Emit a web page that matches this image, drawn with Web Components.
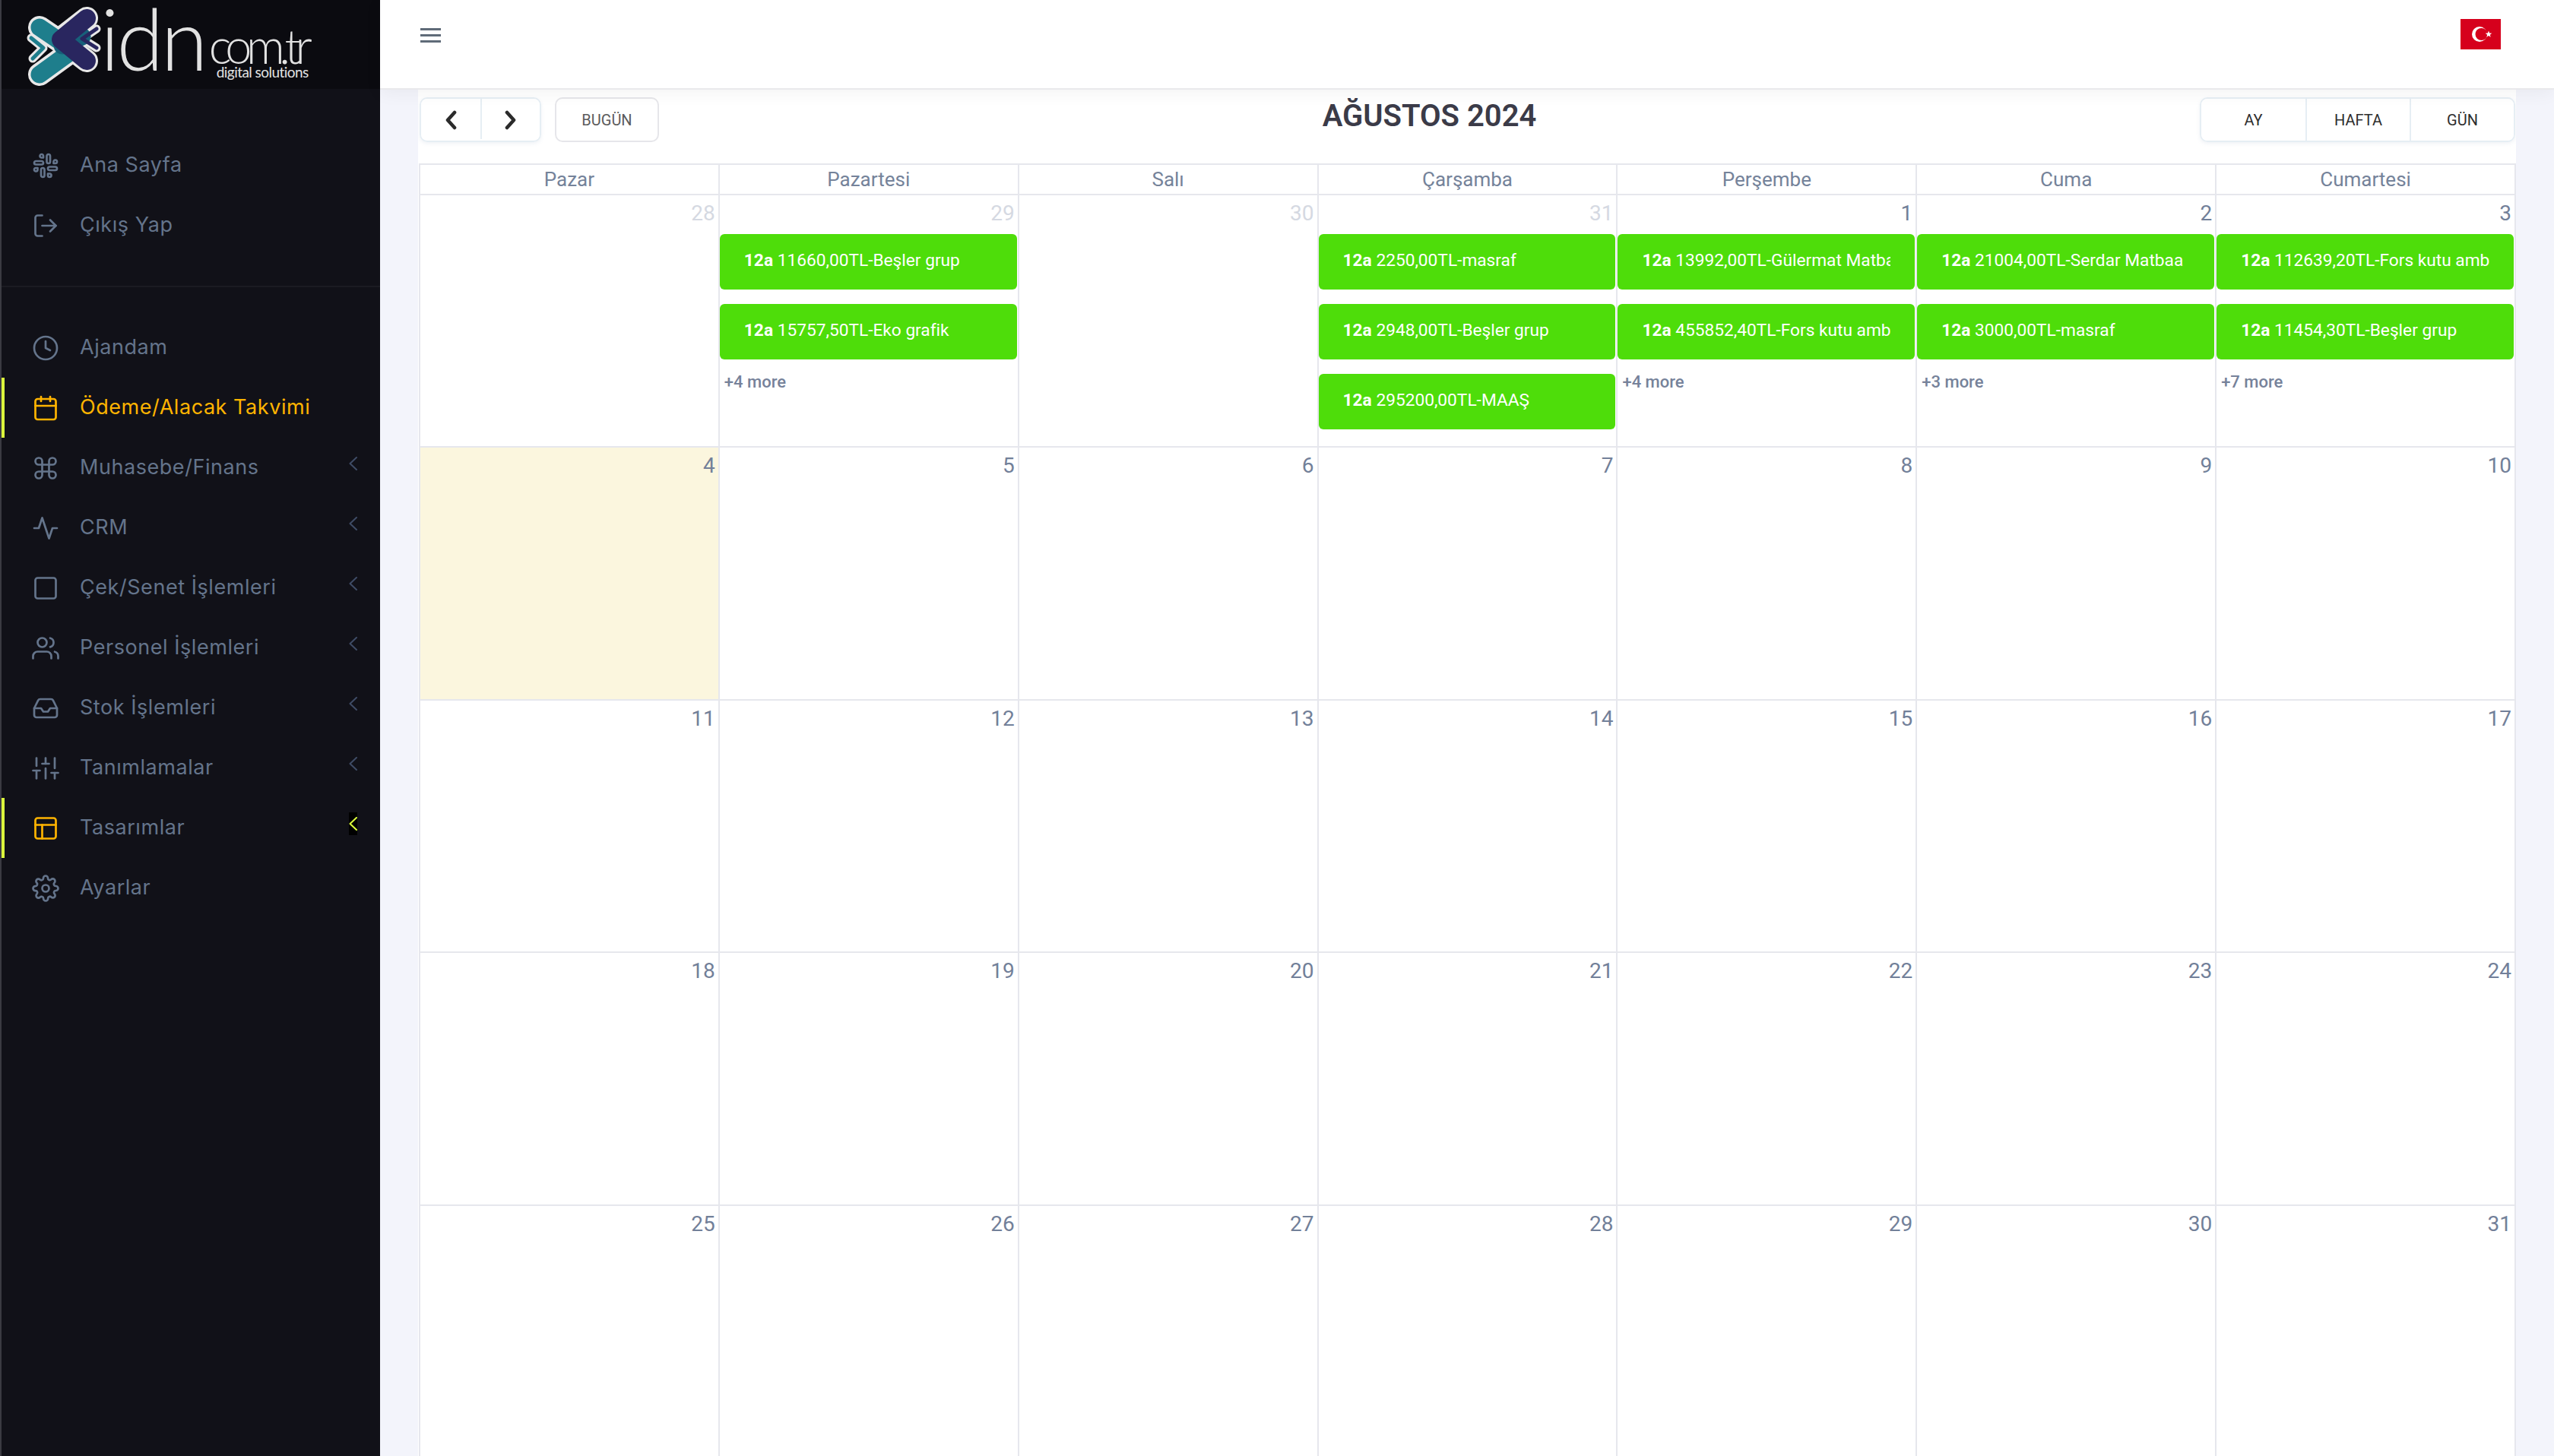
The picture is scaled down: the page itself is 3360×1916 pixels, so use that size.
<!DOCTYPE html>
<html lang="tr">
<head>
<meta charset="utf-8">
<title>Ödeme/Alacak Takvimi</title>
<style>
  html, body { margin: 0; height: 100%; overflow: hidden; background: #f3f4fb; }
</style>
</head>
<body>
<app-shell>
  <side-bar slot="side"></side-bar>
  <top-bar slot="top"></top-bar>
  <cal-card slot="main"></cal-card>
</app-shell>

<script>
const ICONS = {
  slack: '<path d="M14.5 10c-.83 0-1.5-.67-1.5-1.5v-5c0-.83.67-1.5 1.5-1.5s1.5.67 1.5 1.5v5c0 .83-.67 1.5-1.5 1.5z"/><path d="M20.5 10H19V8.5c0-.83.67-1.5 1.5-1.5s1.5.67 1.5 1.5-.67 1.5-1.5 1.5z"/><path d="M9.5 14c.83 0 1.5.67 1.5 1.5v5c0 .83-.67 1.5-1.5 1.5S8 21.33 8 20.5v-5c0-.83.67-1.5 1.5-1.5z"/><path d="M3.5 14H5v1.5c0 .83-.67 1.5-1.5 1.5S2 16.33 2 15.5 2.67 14 3.5 14z"/><path d="M14 14.5c0-.83.67-1.5 1.5-1.5h5c.83 0 1.5.67 1.5 1.5s-.67 1.5-1.5 1.5h-5c-.83 0-1.5-.67-1.5-1.5z"/><path d="M15.5 19H14v1.5c0 .83.67 1.5 1.5 1.5s1.5-.67 1.5-1.5-.67-1.5-1.5-1.5z"/><path d="M10 9.5C10 8.67 9.33 8 8.5 8h-5C2.67 8 2 8.67 2 9.5S2.67 11 3.5 11h5c.83 0 1.5-.67 1.5-1.5z"/><path d="M8.5 5H10V3.5C10 2.67 9.33 2 8.5 2S7 2.67 7 3.5 7.67 5 8.5 5z"/>',
  logout: '<path d="M9 21H5a2 2 0 0 1-2-2V5a2 2 0 0 1 2-2h4"/><polyline points="16 17 21 12 16 7"/><line x1="21" y1="12" x2="9" y2="12"/>',
  clock: '<circle cx="12" cy="12" r="10"/><polyline points="12 6 12 12 16 14"/>',
  calendar: '<rect x="3" y="4" width="18" height="18" rx="2"/><line x1="16" y1="2" x2="16" y2="6"/><line x1="8" y1="2" x2="8" y2="6"/><line x1="3" y1="10" x2="21" y2="10"/>',
  command: '<path d="M18 3a3 3 0 0 0-3 3v12a3 3 0 0 0 3 3 3 3 0 0 0 3-3 3 3 0 0 0-3-3H6a3 3 0 0 0-3 3 3 3 0 0 0 3 3 3 3 0 0 0 3-3V6a3 3 0 0 0-3-3 3 3 0 0 0-3 3 3 3 0 0 0 3 3h12a3 3 0 0 0 3-3 3 3 0 0 0-3-3z"/>',
  activity: '<polyline points="22 12 18 12 15 21 9 3 6 12 2 12"/>',
  square: '<rect x="3" y="3" width="18" height="18" rx="2"/>',
  users: '<path d="M17 21v-2a4 4 0 0 0-4-4H5a4 4 0 0 0-4 4v2"/><circle cx="9" cy="7" r="4"/><path d="M23 21v-2a4 4 0 0 0-3-3.87"/><path d="M16 3.13a4 4 0 0 1 0 7.75"/>',
  inbox: '<polyline points="22 12 16 12 14 15 10 15 8 12 2 12"/><path d="M5.45 5.11L2 12v6a2 2 0 0 0 2 2h16a2 2 0 0 0 2-2v-6l-3.45-6.89A2 2 0 0 0 16.76 4H7.24a2 2 0 0 0-1.79 1.11z"/>',
  sliders: '<line x1="4" y1="21" x2="4" y2="14"/><line x1="4" y1="10" x2="4" y2="3"/><line x1="12" y1="21" x2="12" y2="12"/><line x1="12" y1="8" x2="12" y2="3"/><line x1="20" y1="21" x2="20" y2="16"/><line x1="20" y1="12" x2="20" y2="3"/><line x1="1" y1="14" x2="7" y2="14"/><line x1="9" y1="8" x2="15" y2="8"/><line x1="17" y1="16" x2="23" y2="16"/>',
  layout: '<rect x="3" y="3" width="18" height="18" rx="2"/><line x1="3" y1="9" x2="21" y2="9"/><line x1="9" y1="21" x2="9" y2="9"/>',
  settings: '<circle cx="12" cy="12" r="3"/><path d="M19.4 15a1.65 1.65 0 0 0 .33 1.82l.06.06a2 2 0 0 1 0 2.83 2 2 0 0 1-2.83 0l-.06-.06a1.65 1.65 0 0 0-1.82-.33 1.65 1.65 0 0 0-1 1.51V21a2 2 0 0 1-2 2 2 2 0 0 1-2-2v-.09A1.65 1.65 0 0 0 9 19.4a1.65 1.65 0 0 0-1.82.33l-.06.06a2 2 0 0 1-2.83 0 2 2 0 0 1 0-2.83l.06-.06a1.65 1.65 0 0 0 .33-1.82 1.65 1.65 0 0 0-1.51-1H3a2 2 0 0 1-2-2 2 2 0 0 1 2-2h.09A1.65 1.65 0 0 0 4.6 9a1.65 1.65 0 0 0-.33-1.82l-.06-.06a2 2 0 0 1 0-2.83 2 2 0 0 1 2.83 0l.06.06a1.65 1.65 0 0 0 1.82.33H9a1.65 1.65 0 0 0 1-1.51V3a2 2 0 0 1 2-2 2 2 0 0 1 2 2v.09a1.65 1.65 0 0 0 1 1.51 1.65 1.65 0 0 0 1.82-.33l.06-.06a2 2 0 0 1 2.83 0 2 2 0 0 1 0 2.83l-.06.06a1.65 1.65 0 0 0-.33 1.82V9a1.65 1.65 0 0 0 1.51 1H21a2 2 0 0 1 2 2 2 2 0 0 1-2 2h-.09a1.65 1.65 0 0 0-1.51 1z"/>'
};

class AppShell extends HTMLElement {
  connectedCallback() {
    this.attachShadow({ mode: 'open' });
    this.shadowRoot.innerHTML = `
      <style>
        :host { display: flex; width: 3360px; height: 1916px; overflow: hidden; background: #f3f4fb; }
        .main { flex: 1; min-width: 0; display: flex; flex-direction: column; }
      </style>
      <slot name="side"></slot>
      <div class="main">
        <slot name="top"></slot>
        <slot name="main"></slot>
      </div>
    `;
  }
}

class BrandLogo extends HTMLElement {
  connectedCallback() {
    this.attachShadow({ mode: 'open' });
    this.shadowRoot.innerHTML = `
      <style>
        :host { display: flex; height: 117px; background: #0b0b10; color: #e2e2e2; font-family: Lato, sans-serif; font-weight: 300; }
        svg { flex: none; width: 134px; height: 117px; }
        .idn { font-size: 112px; line-height: 99px; height: 99px; letter-spacing: -3.5px; margin-left: -4px; }
        .rest { display: flex; flex-direction: column; margin-left: 5px; }
        .com { font-size: 63px; line-height: 46px; letter-spacing: -7.5px; margin-top: 37px; }
        .sub { font-size: 19px; line-height: 20px; letter-spacing: -.55px; margin: 2px 0 0 10px; font-weight: 400; }
      </style>
      <svg viewBox="0 0 134 117" fill="none" stroke-linecap="round" stroke-linejoin="round">
        <g stroke="#e8e8e8">
          <polyline points="50,36 94,66 50,98" stroke-width="30"/>
          <polyline points="39,50 55,63 41,77" stroke-width="11"/>
          <polyline points="112,24 76,52 112,80" stroke-width="30"/>
          <polyline points="125,38 106,51 125,63" stroke-width="11"/>
        </g>
        <polyline points="50,36 94,66 50,98" stroke="#1e7e8c" stroke-width="23"/>
        <polyline points="39,50 55,63 41,77" stroke="#1e7e8c" stroke-width="5"/>
        <polyline points="106,48 80,60" stroke="#17607a" stroke-width="23"/>
        <polyline points="112,24 78,52 112,80" stroke="#29265f" stroke-width="24"/>
        <polyline points="125,38 106,51 125,63" stroke="#29265f" stroke-width="5"/>
      </svg>
      <span class="idn">idn</span>
      <div class="rest">
        <span class="com">com.tr</span>
        <span class="sub">digital solutions</span>
      </div>
    `;
  }
}

class SideItem extends HTMLElement {
  connectedCallback() {
    const icon = this.getAttribute('icon');
    const arrow = this.hasAttribute('arrow');
    this.attachShadow({ mode: 'open' });
    this.shadowRoot.innerHTML = `
      <style>
        :host { display: flex; align-items: center; height: 79px; padding-left: 36px; color: #64748b; font-family: Inter, sans-serif; font-size: 27px; letter-spacing: .55px; box-sizing: border-box; border-left: 4px solid transparent; }
        :host([active]) { border-left-color: #dcff3c; }
        :host([current]) { color: #ffb400; }
        .ic { flex: none; width: 36px; height: 36px; margin-right: 27px; fill: none; stroke: currentColor; stroke-width: 1.8; stroke-linecap: round; stroke-linejoin: round; }
        :host([active]) .ic { color: #ffb400; }
        .label { flex: 1; margin-top: -3px; white-space: nowrap; }
        .arrow { flex: none; width: 11px; height: 30px; margin: -12px 30px 0 0; display: flex; align-items: center; }
        .arrow svg { width: 11px; height: 18px; fill: none; stroke: #3f4c66; stroke-width: 2; stroke-linecap: round; stroke-linejoin: round; }
        :host([active]) .arrow { background: #000; }
        :host([active]) .arrow svg { stroke: #dcff3c; }
      </style>
      <svg class="ic" viewBox="0 0 24 24">${ICONS[icon]}</svg>
      <span class="label"><slot></slot></span>
      ${arrow ? '<span class="arrow"><svg viewBox="0 0 11 18"><polyline points="10 1 1.5 9 10 17"/></svg></span>' : ''}
    `;
  }
}

class SideBar extends HTMLElement {
  connectedCallback() {
    this.attachShadow({ mode: 'open' });
    this.shadowRoot.innerHTML = `
      <style>
        :host { display: flex; flex-direction: column; flex: none; width: 500px; box-sizing: border-box; height: 1916px; background: #111118; border-left: 2px solid #3b3b42; }
        .top { padding: 61px 0 40px; border-bottom: 2px solid #1b1b22; }
        .nav { padding-top: 40px; }
      </style>
      <brand-logo></brand-logo>
      <div class="top">
        <side-item icon="slack">Ana Sayfa</side-item>
        <side-item icon="logout">Çıkış Yap</side-item>
      </div>
      <div class="nav">
        <side-item icon="clock">Ajandam</side-item>
        <side-item icon="calendar" active current>Ödeme/Alacak Takvimi</side-item>
        <side-item icon="command" arrow>Muhasebe/Finans</side-item>
        <side-item icon="activity" arrow>CRM</side-item>
        <side-item icon="square" arrow>Çek/Senet İşlemleri</side-item>
        <side-item icon="users" arrow>Personel İşlemleri</side-item>
        <side-item icon="inbox" arrow>Stok İşlemleri</side-item>
        <side-item icon="sliders" arrow>Tanımlamalar</side-item>
        <side-item icon="layout" arrow active>Tasarımlar</side-item>
        <side-item icon="settings">Ayarlar</side-item>
      </div>
    `;
  }
}

class TopBar extends HTMLElement {
  connectedCallback() {
    this.attachShadow({ mode: 'open' });
    this.shadowRoot.innerHTML = `
      <style>
        :host { display: flex; justify-content: space-between; align-items: flex-start; flex: none; box-sizing: border-box; height: 118px; padding: 25px 70px 0 53px; background: #fff; border-bottom: 2px solid #e9e9ec; box-shadow: 0 4px 22px rgba(0,0,0,.05); position: relative; z-index: 2; }
        .menu { width: 27px; height: 19px; margin-top: 12px; display: flex; flex-direction: column; justify-content: space-between; }
        .menu i { display: block; height: 3px; background: #5f6b78; }
        .flag { display: block; width: 53px; height: 40px; }
      </style>
      <div class="menu"><i></i><i></i><i></i></div>
      <svg class="flag" viewBox="0 0 53 40">
        <rect width="53" height="40" fill="#d6001c"/>
        <circle cx="25" cy="20" r="10" fill="#fff"/>
        <circle cx="27.5" cy="20" r="8" fill="#d6001c"/>
        <polygon fill="#fff" points="37,15.6 38.1,18.6 41.3,18.7 38.8,20.7 39.7,23.8 37,22 34.3,23.8 35.2,20.7 32.7,18.7 35.9,18.6"/>
      </svg>
    `;
  }
}

class CalButton extends HTMLElement {
  connectedCallback() {
    this.attachShadow({ mode: 'open' });
    this.shadowRoot.innerHTML = `
      <style>
        :host { display: flex; align-items: center; justify-content: center; box-sizing: border-box; font-size: 20px; color: #2e2e2e; background: #fff; }
        ::slotted(svg) { width: 20px; height: 26px; fill: none; stroke: #2b2b2b; stroke-width: 4.6; stroke-linecap: round; stroke-linejoin: round; }
      </style>
      <slot></slot>
    `;
  }
}

class CalToolbar extends HTMLElement {
  connectedCallback() {
    this.attachShadow({ mode: 'open' });
    this.shadowRoot.innerHTML = `
      <style>
        :host { display: flex; justify-content: space-between; align-items: flex-start; height: 87px; padding: 10px 1px 0 2px; font-family: Roboto, sans-serif; }
        .left { display: flex; gap: 18px; }
        .group { display: flex; border: 2px solid #e6eef4; border-radius: 10px; overflow: hidden; box-shadow: 0 2px 5px rgba(120,150,180,.12); }
        .nav cal-button { width: 78px; height: 53px; padding-top: 2px; }
        .nav cal-button + cal-button { border-left: 2px solid #e6eef4; }
        .views cal-button { width: 137px; height: 55px; }
        .views cal-button + cal-button { border-left: 2px solid #e6eef4; }
        .today { width: 137px; height: 59px; border: 2px solid #e6e6ea; border-radius: 10px; color: #5b5b5b; }
        h2 { margin: 0; font-size: 40px; line-height: 50px; font-weight: 600; color: #3b3b48; white-space: nowrap; }
      </style>
      <div class="left">
        <div class="group nav">
          <cal-button><svg viewBox="0 0 20 26"><polyline points="15 3 6 13 15 23"/></svg></cal-button>
          <cal-button><svg viewBox="0 0 20 26"><polyline points="5 3 14 13 5 23"/></svg></cal-button>
        </div>
        <cal-button class="today">BUGÜN</cal-button>
      </div>
      <h2><slot></slot></h2>
      <div class="group views">
        <cal-button>AY</cal-button>
        <cal-button>HAFTA</cal-button>
        <cal-button>GÜN</cal-button>
      </div>
    `;
  }
}

class CalEvent extends HTMLElement {
  connectedCallback() {
    this.attachShadow({ mode: 'open' });
    this.shadowRoot.innerHTML = `
      <style>
        :host { display: block; height: 72.7px; line-height: 70px; margin: 0 1px 19.5px 0; padding: 0 32px; background: #4edd0a; border-radius: 6px; color: #fff; font-size: 22.7px; }
        .clip { display: block; overflow: hidden; white-space: nowrap; }
        b { font-weight: 700; }
      </style>
      <span class="clip"><b>12a</b> <slot></slot></span>
    `;
  }
}

class CalDay extends HTMLElement {
  connectedCallback() {
    const events = (this.getAttribute('events') || '').split('|').filter(Boolean);
    const more = this.getAttribute('more');
    this.attachShadow({ mode: 'open' });
    this.shadowRoot.innerHTML = `
      <style>
        :host { display: block; box-sizing: border-box; min-width: 0; overflow: hidden; border-left: 2px solid #e6e7ed; border-bottom: 2px solid #e6e7ed; color: #728099; }
        :host([other]) .num { color: #d5d9e2; }
        :host([today]) { background: #fbf6de; }
        .num { height: 51px; padding: 6px 4px 0 0; box-sizing: border-box; text-align: right; font-size: 28px; line-height: 36px; }
        .more { margin: -4px 0 0 6px; font-size: 22px; line-height: 30px; font-weight: 500; color: #76829a; }
      </style>
      <div class="num"><slot></slot></div>
      ${events.map(e => `<cal-event>${e}</cal-event>`).join('')}
      ${more ? `<div class="more">+${more} more</div>` : ''}
    `;
  }
}

class CalMonth extends HTMLElement {
  connectedCallback() {
    const heads = ['Pazar', 'Pazartesi', 'Salı', 'Çarşamba', 'Perşembe', 'Cuma', 'Cumartesi'];
    const data = {
      'j29': { e: '11660,00TL-Beşler grup|15757,50TL-Eko grafik', m: 4 },
      'j31': { e: '2250,00TL-masraf|2948,00TL-Beşler grup|295200,00TL-MAAŞ' },
      'a1': { e: '13992,00TL-Gülermat Matbaa|455852,40TL-Fors kutu amb', m: 4 },
      'a2': { e: '21004,00TL-Serdar Matbaa|3000,00TL-masraf', m: 3 },
      'a3': { e: '112639,20TL-Fors kutu amb|11454,30TL-Beşler grup', m: 7 }
    };
    let cells = '';
    [28, 29, 30, 31].forEach(d => {
      const x = data['j' + d] || {};
      cells += `<cal-day other events="${x.e || ''}" more="${x.m || ''}">${d}</cal-day>`;
    });
    for (let d = 1; d <= 31; d++) {
      const x = data['a' + d] || {};
      cells += `<cal-day ${d === 4 ? 'today' : ''} events="${x.e || ''}" more="${x.m || ''}">${d}</cal-day>`;
    }
    this.attachShadow({ mode: 'open' });
    this.shadowRoot.innerHTML = `
      <style>
        :host { display: block; width: 2759px; margin-left: 1px; font-family: Roboto, sans-serif; border-top: 2px solid #e6e7ed; border-right: 2px solid #e6e7ed; box-sizing: border-box; }
        .row { display: grid; grid-template-columns: repeat(7, 1fr); }
        .head { height: 40px; }
        .head div { box-sizing: border-box; border-left: 2px solid #e6e7ed; border-bottom: 2px solid #e6e7ed; text-align: center; font-size: 26px; line-height: 38px; color: #75839a; }
        .body { grid-auto-rows: 332.4px; }
      </style>
      <div class="row head">${heads.map(h => `<div>${h}</div>`).join('')}</div>
      <div class="row body">${cells}</div>
    `;
  }
}

class CalCard extends HTMLElement {
  connectedCallback() {
    this.attachShadow({ mode: 'open' });
    this.shadowRoot.innerHTML = `
      <style>
        :host { display: block; flex: 1; min-height: 0; margin: 0 50px; background: #fff; overflow: hidden; }
      </style>
      <cal-toolbar>AĞUSTOS 2024</cal-toolbar>
      <cal-month></cal-month>
    `;
  }
}

customElements.define('app-shell', AppShell);
customElements.define('brand-logo', BrandLogo);
customElements.define('side-item', SideItem);
customElements.define('side-bar', SideBar);
customElements.define('top-bar', TopBar);
customElements.define('cal-button', CalButton);
customElements.define('cal-toolbar', CalToolbar);
customElements.define('cal-event', CalEvent);
customElements.define('cal-day', CalDay);
customElements.define('cal-month', CalMonth);
customElements.define('cal-card', CalCard);
</script>
</body>
</html>
